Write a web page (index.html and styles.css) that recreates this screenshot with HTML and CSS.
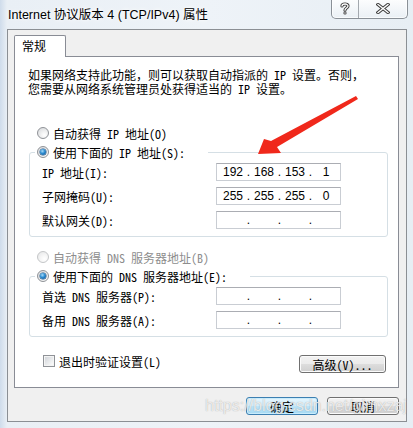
FILE: index.html
```html
<!DOCTYPE html>
<html lang="zh-CN">
<head>
    <meta charset="UTF-8">
    <title>Internet 协议版本 4 (TCP/IPv4) 属性</title>
    <link rel="stylesheet" href="styles.css">
</head>
<body>
    <div class="window">
        <!-- 标题栏 -->
        <div class="titlebar">
            <span class="title">Internet 协议版本 4 (TCP/IPv4) 属性</span>
            <div class="caption-btns">
                <span class="cap-btn help">
                    <svg width="10" height="13" viewBox="0 0 10 13">
                        <path d="M2 4 C2 1.5 8 1.2 8 4 C8 6 5 6 5 8.2" fill="none" stroke="#3d3d3d" stroke-width="3.2" stroke-linecap="round"/>
                        <circle cx="5" cy="11" r="1.6" fill="#3d3d3d"/>
                        <path d="M2 4 C2 1.5 8 1.2 8 4 C8 6 5 6 5 8.2" fill="none" stroke="#fff" stroke-width="1.3" stroke-linecap="round"/>
                        <circle cx="5" cy="11" r="0.7" fill="#fff"/>
                    </svg>
                </span>
                <span class="cap-btn close">
                    <svg width="14" height="11" viewBox="0 0 14 11">
                        <path d="M2 1.5 L12 9.5 M12 1.5 L2 9.5" stroke="#3d3d3d" stroke-width="3.4" stroke-linecap="square"/>
                        <path d="M2 1.5 L12 9.5 M12 1.5 L2 9.5" stroke="#fff" stroke-width="1.4" stroke-linecap="square"/>
                    </svg>
                </span>
            </div>
        </div>

        <div class="client">
            <div class="tabs">
                <span class="tab">常规</span>
            </div>

            <div class="panel">
                <p class="desc">如果网络支持此功能，则可以获取自动指派的 IP 设置。否则，<br>您需要从网络系统管理员处获得适当的 IP 设置。</p>

                <label class="radio-row"><span class="radio"></span>自动获得 IP 地址(O)</label>

                <fieldset class="group">
                    <legend><span class="radio checked"></span>使用下面的 IP 地址(S):</legend>
                    <div class="field">
                        <span class="label">IP 地址(I):</span>
                        <div class="ipbox">
                            <span class="seg">192</span><span class="dot">.</span><span class="seg">168</span><span class="dot">.</span><span class="seg">153</span><span class="dot">.</span><span class="seg">1</span>
                        </div>
                    </div>
                    <div class="field">
                        <span class="label">子网掩码(U):</span>
                        <div class="ipbox">
                            <span class="seg">255</span><span class="dot">.</span><span class="seg">255</span><span class="dot">.</span><span class="seg">255</span><span class="dot">.</span><span class="seg">0</span>
                        </div>
                    </div>
                    <div class="field">
                        <span class="label">默认网关(D):</span>
                        <div class="ipbox">
                            <span class="seg"></span><span class="dot">.</span><span class="seg"></span><span class="dot">.</span><span class="seg"></span><span class="dot">.</span><span class="seg"></span>
                        </div>
                    </div>
                </fieldset>

                <label class="radio-row disabled"><span class="radio"></span>自动获得 DNS 服务器地址(B)</label>

                <fieldset class="group">
                    <legend><span class="radio checked"></span>使用下面的 DNS 服务器地址(E):</legend>
                    <div class="field">
                        <span class="label">首选 DNS 服务器(P):</span>
                        <div class="ipbox">
                            <span class="seg"></span><span class="dot">.</span><span class="seg"></span><span class="dot">.</span><span class="seg"></span><span class="dot">.</span><span class="seg"></span>
                        </div>
                    </div>
                    <div class="field">
                        <span class="label">备用 DNS 服务器(A):</span>
                        <div class="ipbox">
                            <span class="seg"></span><span class="dot">.</span><span class="seg"></span><span class="dot">.</span><span class="seg"></span><span class="dot">.</span><span class="seg"></span>
                        </div>
                    </div>
                </fieldset>

                <div class="bottom-row">
                    <label class="check-row"><span class="checkbox"></span>退出时验证设置(L)</label>
                    <button class="btn adv">高级(V)...</button>
                </div>
            </div>

            <div class="footer">
                <button class="btn default">确定</button>
                <button class="btn">取消</button>
            </div>
        </div>

        <!-- 红色箭头标注 -->
        <svg class="arrow" width="413" height="428" viewBox="0 0 413 428">
            <polygon points="356,96 358,99 277,147 281,153 258,154 264,139 271,141" fill="#f0281b"/>
        </svg>

        <div class="watermark">https://blog.csdn.net/gimxzaj</div>
    </div>
</body>
</html>
```

FILE: styles.css
```css
* {
    margin: 0;
    padding: 0;
    box-sizing: border-box;
}

body {
    background: #e6edf3;
    font-family: 'Noto Sans Mono CJK SC', 'Noto Sans CJK SC', monospace;
    font-size: 12px;
    color: #000;
}

/* 窗口外框 */
.window {
    position: relative;
    width: 413px;
    height: 428px;
    background: linear-gradient(90deg, #cfdceb 0px, #e9eff5 7px, #eef3f8 50%, #e7eef4 100%);
    overflow: hidden;
}

/* 标题栏 */
.titlebar {
    height: 29px;
    display: flex;
    justify-content: space-between;
    align-items: flex-start;
    padding: 0 5px 0 8px;
}

.title {
    font-family: 'Liberation Sans', 'Noto Sans CJK SC', sans-serif;
    font-size: 12.5px;
    line-height: 14px;
    margin-top: 8px;
    text-shadow: 0 0 6px #fff, 0 0 3px #fff;
}

.caption-btns {
    display: flex;
    height: 20px;
    margin-top: -1px;
    border: 1px solid #8a9097;
    border-top: none;
    border-radius: 0 0 5px 5px;
    background: linear-gradient(180deg, rgba(255,255,255,0.9), rgba(235,240,245,0.6));
    box-shadow: inset 0 0 0 1px rgba(255,255,255,0.7);
}

.cap-btn {
    display: flex;
    align-items: center;
    justify-content: center;
}

.cap-btn.help {
    width: 27px;
    border-right: 1px solid #a3a8ae;
}

.cap-btn.close {
    width: 48px;
}

/* 客户区 */
.client {
    width: 400px;
    height: 393px;
    margin-left: 7px;
    border: 1px solid #8b8f94;
    background: #f0f0f0;
    display: flex;
    flex-direction: column;
}

.tabs {
    display: flex;
    padding: 5px 0 0 6px;
}

.tab {
    position: relative;
    z-index: 1;
    width: 52px;
    height: 22px;
    margin-bottom: -1px;
    background: #fff;
    border: 1px solid #898c95;
    border-bottom: none;
    border-radius: 2px 2px 0 0;
    font-family: 'Noto Sans CJK SC', sans-serif;
    line-height: 20px;
    padding-left: 7px;
}

.panel {
    height: 332px;
    margin: 0 7px 0 6px;
    background: #fff;
    border: 1px solid #898c95;
    display: flex;
    flex-direction: column;
    align-items: flex-start;
}

.desc {
    margin: 11px 0 0 13px;
    line-height: 14px;
    white-space: nowrap;
}

/* 单选按钮 */
.radio-row {
    display: flex;
    align-items: center;
    height: 16px;
    margin: 29px 0 0 22px;
    gap: 4px;
}

.radio-row.disabled {
    margin-top: 12px;
    color: #8d8d8d;
}

.radio {
    position: relative;
    width: 12px;
    height: 12px;
    border-radius: 50%;
    border: 1px solid #8f9297;
    background: radial-gradient(circle at 65% 70%, #ffffff 0, #f4f4f4 30%, #d3d6d9 100%);
    flex-shrink: 0;
}

.disabled .radio {
    border-color: #c4c6c8;
    background: radial-gradient(circle at 65% 70%, #ffffff 0, #f6f6f6 40%, #e3e4e5 100%);
}

.radio.checked::after {
    content: '';
    position: absolute;
    left: 2px;
    top: 2px;
    width: 6px;
    height: 6px;
    border-radius: 50%;
    background: radial-gradient(circle at 40% 35%, #a8dcfa 0, #2a8ad0 45%, #0d4a85 100%);
    box-shadow: 0 0 0 0.5px #1d4f7e;
}

/* 分组框 */
.group {
    align-self: stretch;
    margin: 3px 10px 0 14px;
    padding: 3px 10px 7px 12px;
    border: 1px solid #d5dfe5;
    border-radius: 3px;
    display: flex;
    flex-direction: column;
    gap: 6px;
}

.group legend {
    display: flex;
    align-items: center;
    gap: 4px;
    height: 16px;
    margin-left: -7px;
    padding: 0 23px 0 2px;
}

.field {
    display: flex;
    align-items: center;
    height: 18px;
}

.label {
    width: 174px;
    white-space: nowrap;
}

.ipbox {
    display: flex;
    width: 125px;
    height: 18px;
    padding-left: 2px;
    border: 1px solid #c9cdd3;
    border-top-color: #abadb3;
    background: #fff;
    font-family: 'Liberation Sans', sans-serif;
    font-size: 12px;
    line-height: 16px;
}

.seg {
    width: 28px;
    text-align: center;
}

.dot {
    width: 3px;
    display: flex;
    justify-content: center;
}

/* 底部选项 */
.bottom-row {
    align-self: stretch;
    display: flex;
    justify-content: space-between;
    align-items: flex-start;
    margin: 17px 12px 0 28px;
}

.check-row {
    display: flex;
    align-items: center;
    gap: 4px;
    height: 14px;
}

.checkbox {
    width: 12px;
    height: 12px;
    border: 1px solid #8f9297;
    background: linear-gradient(135deg, #cdd1d6 0%, #f1f2f3 70%, #ffffff 100%);
    box-shadow: inset 0 0 0 1px #f4f4f4;
}

/* 按钮 */
.btn {
    height: 18px;
    border: 1px solid #707070;
    border-radius: 3px;
    background: linear-gradient(180deg, #f2f2f2 0%, #ebebeb 50%, #dddddd 51%, #cfcfcf 100%);
    box-shadow: inset 0 0 0 1px #fbfbfb;
    font-family: 'Noto Sans CJK SC', sans-serif;
    font-size: 12px;
    line-height: 15px;
    color: #000;
    width: 72px;
}

.btn.adv {
    width: 87px;
    margin-top: 1px;
    font-family: 'Noto Sans Mono CJK SC', 'Noto Sans CJK SC', monospace;
}

.btn.default {
    border-color: #3c7fb1;
    background: linear-gradient(180deg, #e5f5fd 0%, #d3eefb 50%, #bde5f8 51%, #a6d9f3 100%);
    box-shadow: inset 0 0 0 1px #c8ecfc;
}

.footer {
    display: flex;
    justify-content: flex-end;
    gap: 9px;
    padding: 9px 7px 0 0;
}

/* 标注与水印 */
.arrow {
    position: absolute;
    left: 0;
    top: 0;
    pointer-events: none;
}

.watermark {
    position: absolute;
    left: 205px;
    top: 397px;
    font-family: 'Liberation Sans', sans-serif;
    font-size: 16px;
    color: rgba(255, 255, 255, 0.75);
    text-shadow: 0 0 1px rgba(110, 110, 110, 0.6);
    white-space: nowrap;
    pointer-events: none;
}
```
